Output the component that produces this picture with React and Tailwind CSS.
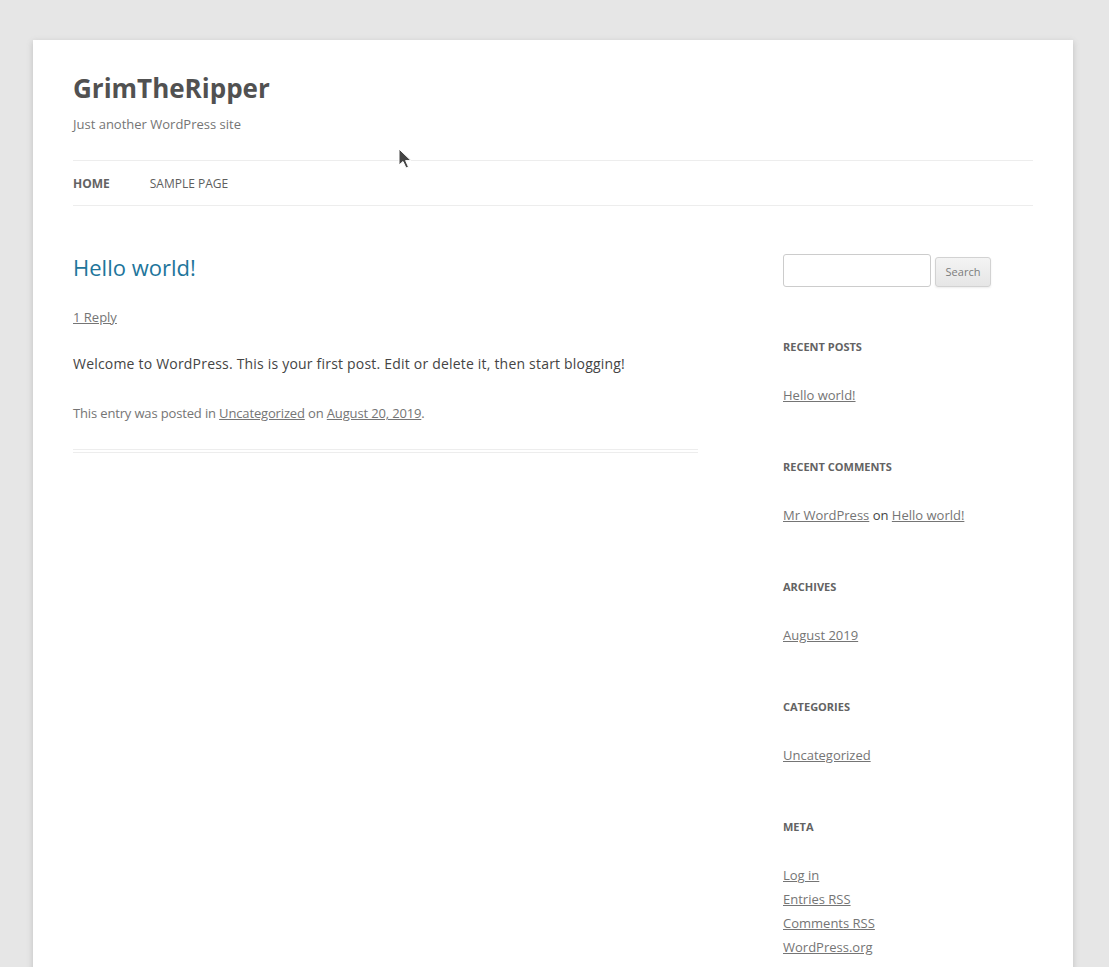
import React from "react";

const linkCls = "text-[#757575] underline";

function Widget({ title, children, first }) {
  return (
    <section className={first ? "" : "mt-[48px]"}>
      <h3 className="text-[11px] leading-[24px] font-bold uppercase text-[#636363]">{title}</h3>
      <ul className="mt-[24px] text-[13px] leading-[24px] text-[#444]">{children}</ul>
    </section>
  );
}

export default function App() {
  return (
    <div
      className="min-h-[967px] bg-[#e6e6e6] pt-[40px] relative"
      style={{ fontFamily: '"Open Sans", "Liberation Sans", sans-serif' }}
    >
      <div className="ml-[33px] w-[1040px] bg-white px-[40px] pb-[40px] shadow-[0_2px_6px_rgba(100,100,100,0.3)] min-h-[927px]">
        <header className="pt-[33px]">
          <h1 className="text-[26px] leading-[31px] font-bold text-[#515151]">GrimTheRipper</h1>
          <h2 className="mt-[8px] text-[13px] leading-[24px] text-[#757575]">Just another WordPress site</h2>
          <nav className="mt-[24px] border-t border-b border-[#ededed]">
            <ul className="flex gap-[40px] text-[12px] leading-[44px] uppercase pt-[1px] -mb-[1px]">
              <li className="font-bold text-[#636363]">Home</li>
              <li className="text-[#5e5e5e]">Sample Page</li>
            </ul>
          </nav>
        </header>

        <div className="flex justify-between">
          <main className="w-[625px]">
            <article className="mt-[49px] pb-[24px] border-b-[4px] border-double border-[#ededed]">
              <h1 className="text-[22px] leading-[24px] text-[#21759b]">Hello world!</h1>
              <div className="mt-[26px] text-[13px] leading-[24px]">
                <a className={linkCls}>1 Reply</a>
              </div>
              <p className="mt-[23px] text-[14px] leading-[24px] text-[#444] tracking-[0.2px]">
                Welcome to WordPress. This is your first post. Edit or delete it, then start blogging!
              </p>
              <p className="mt-[25px] text-[13px] leading-[24px] text-[#757575] tracking-[-0.15px]">
                This entry was posted in <a className={linkCls}>Uncategorized</a> on{" "}
                <a className={linkCls}>August 20, 2019</a>.
              </p>
            </article>
          </main>

          <aside className="w-[250px] pt-[48px]">
            <div className="flex items-center gap-[4px]">
              <input
                type="text"
                className="w-[148px] h-[33px] border border-[#cccccc] rounded-[3px] px-[6px] text-[13px] outline-none"
              />
              <button className="mt-[3px] h-[30px] w-[56px] text-[11px] text-[#7c7c7c] border border-[#d2d2d2] rounded-[3px] bg-gradient-to-b from-[#f4f4f4] to-[#e6e6e6] shadow-[0_1px_2px_rgba(64,64,64,0.1)]">
                Search
              </button>
            </div>
            <div className="mt-[48px]">
              <Widget title="Recent Posts" first>
                <li><a className={linkCls}>Hello world!</a></li>
              </Widget>
              <Widget title="Recent Comments">
                <li>
                  <a className={linkCls}>Mr WordPress</a> on <a className={linkCls}>Hello world!</a>
                </li>
              </Widget>
              <Widget title="Archives">
                <li><a className={linkCls}>August 2019</a></li>
              </Widget>
              <Widget title="Categories">
                <li><a className={linkCls}>Uncategorized</a></li>
              </Widget>
              <Widget title="Meta">
                <li><a className={linkCls}>Log in</a></li>
                <li><a className={linkCls}>Entries RSS</a></li>
                <li><a className={linkCls}>Comments RSS</a></li>
                <li><a className={linkCls}>WordPress.org</a></li>
              </Widget>
            </div>
          </aside>
        </div>
      </div>

      <svg className="absolute left-[398px] top-[148px]" width="16" height="24" viewBox="0 0 16 24">
        <path d="M1 1 L1 17 L5 13.5 L8 20 L10.5 19 L7.6 12.6 L13 12.6 Z" fill="#444" stroke="#fff" strokeWidth="1" strokeLinejoin="round" />
      </svg>
    </div>
  );
}
